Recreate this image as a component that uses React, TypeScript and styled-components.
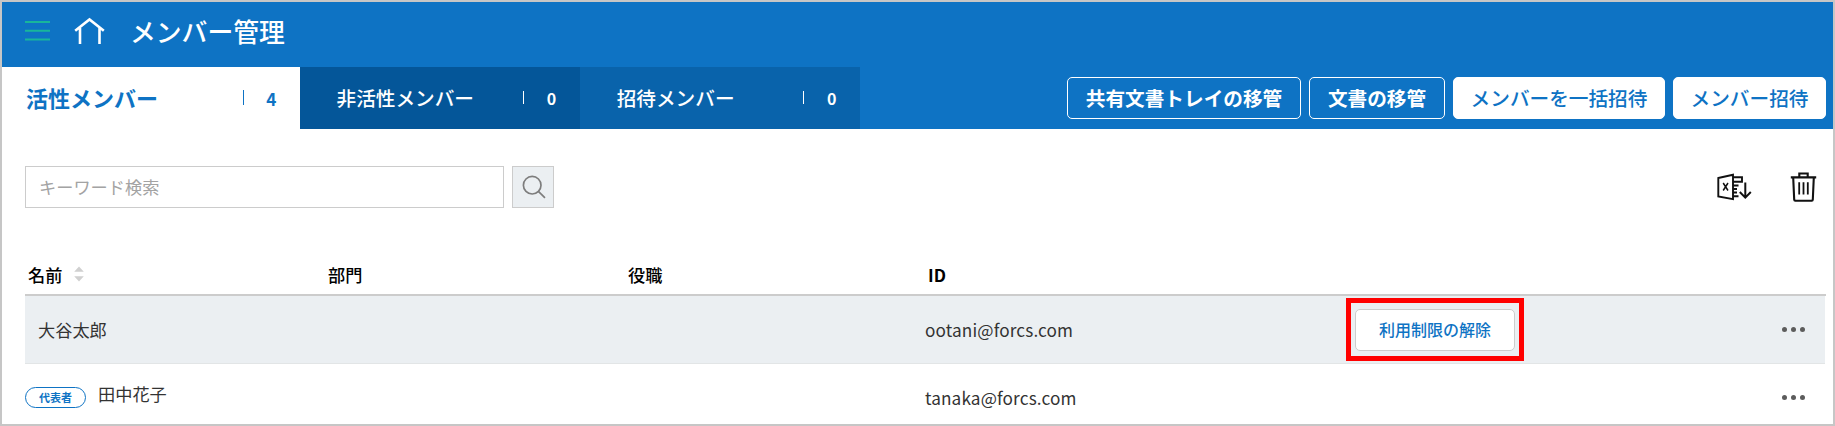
import React from 'react';
import styled, { createGlobalStyle } from 'styled-components';

const blue = '#0e73c4';

const GlobalStyle = createGlobalStyle`
  *, *::before, *::after { box-sizing: border-box; }
  body { margin: 0; background: #fff; }
  button { font: inherit; margin: 0; cursor: pointer; }
`;

const Frame = styled.div`
  width: 1835px;
  height: 426px;
  overflow: hidden;
  border: 2px solid #c6c6c6;
  background: #fff;
  color: #333;
  font-family: 'Noto Sans CJK JP', 'Noto Sans', sans-serif;
  font-size: 17.2px;
  line-height: 1;
`;

const Header = styled.header`
  height: 126.5px;
  background: ${blue};
  color: #fff;
`;

const TitleBar = styled.div`
  display: flex;
  align-items: center;
  height: 65px;
  padding: 0 0 7px 23px;
`;

const HomeLink = styled.a`
  display: flex;
  margin: 0 0 1px 24px;
`;

const Title = styled.h1`
  margin: 0 0 1px 25px;
  font-size: 25.8px;
  font-weight: 500;
`;

const NavRow = styled.div`
  display: flex;
  height: 61.5px;
`;

const Tab = styled.button<{ $tone: string; $active?: boolean }>`
  display: flex;
  align-items: center;
  width: ${p => (p.$active ? '297.5px' : '280.2px')};
  padding: ${p => (p.$active ? '0 23px 1px 24px' : '0 23.5px 0 37px')};
  border: 0;
  background: ${p => p.$tone};
  color: ${p => (p.$active ? blue : '#fff')};
  font-size: ${p => (p.$active ? '22px' : '19.65px')};
  font-weight: ${p => (p.$active ? 700 : 500)};
  line-height: 1;
  white-space: nowrap;
`;

const TabRule = styled.i<{ $tall?: boolean }>`
  width: 1px;
  height: ${p => (p.$tall ? 15 : 13)}px;
  margin: 0 ${p => (p.$tall ? 22 : 22.5)}px 0 auto;
  background: currentColor;
`;

const TabCount = styled.span<{ $large?: boolean }>`
  margin-top: ${p => (p.$large ? 3 : 0)}px;
  font-size: ${p => (p.$large ? '17.2px' : '16px')};
  font-weight: 700;
`;

const Actions = styled.div`
  display: flex;
  gap: 8px;
  margin: 10px 7px 0 auto;
`;

const ActionButton = styled.button<{ $w: number; $solid?: boolean }>`
  width: ${p => p.$w}px;
  height: 42px;
  padding: 0;
  border: 1px solid #fff;
  border-radius: 5px;
  background: ${p => (p.$solid ? '#fff' : 'transparent')};
  color: ${p => (p.$solid ? blue : '#fff')};
  font-size: 19.65px;
  font-weight: ${p => (p.$solid ? 500 : 700)};
  line-height: 1;
  white-space: nowrap;
`;

const Toolbar = styled.div`
  display: flex;
  align-items: center;
  height: 42px;
  margin: 37px 0 0 23px;
`;

const SearchInput = styled.input`
  width: 479px;
  height: 42px;
  padding: 0 13px 0 13px;
  border: 1px solid #ccc;
  outline: 0;
  font: inherit;
  color: #333;
  &::placeholder { color: #a3a3a3; opacity: 1; }
`;

const SearchButton = styled.button`
  display: flex;
  width: 42px;
  height: 42px;
  margin-left: 8px;
  padding: 8px 0 0 9px;
  border: 1px solid #ccc;
  background: #ebeff2;
`;

const Tools = styled.div`
  display: flex;
  align-items: center;
  gap: 38px;
  margin: 0 16px 0 auto;
`;

const Table = styled.section`
  width: 1801px;
  margin: 49px 0 0 23px;
`;

const columns = '300px 300px 300px 430px 1fr';

const HeadRow = styled.div`
  display: grid;
  grid-template-columns: ${columns};
  align-items: center;
  height: 39.5px;
  padding: 0 0 2px 3px;
  border-bottom: 2px solid #ccc;
  color: #000;
  font-weight: 500;
`;

const HeadCell = styled.div<{ $bold?: boolean }>`
  display: flex;
  align-items: center;
  gap: 12px;
  font-weight: ${p => (p.$bold ? 700 : 500)};
`;

const Row = styled.div<{ $shaded?: boolean }>`
  display: grid;
  grid-template-columns: ${columns};
  align-items: center;
  width: 1799.5px;
  height: 68px;
  background: ${p => (p.$shaded ? '#ebeff2' : '#fff')};
  border-bottom: 1px solid #e2e5e6;
`;

const NameCell = styled.div<{ $indent?: boolean }>`
  display: flex;
  align-items: center;
  gap: 12px;
  padding-left: ${p => (p.$indent ? 13 : 0)}px;
`;

const MemberName = styled.span<{ $raised?: boolean }>`
  margin-bottom: ${p => (p.$raised ? 7 : 0)}px;
`;

const IdCell = styled.div`
  grid-column: 4;
  letter-spacing: 0.13px;
`;

const Badge = styled.span`
  display: flex;
  align-items: center;
  justify-content: center;
  width: 61px;
  height: 21px;
  border: 1.3px solid ${blue};
  border-radius: 11px;
  color: ${blue};
  font-size: 11px;
  font-weight: 700;
`;

const RowActions = styled.div`
  grid-column: 5;
  display: flex;
  align-items: center;
  justify-content: space-between;
  padding-right: 20px;
`;

const Highlight = styled.div`
  position: relative;
  &::after {
    content: '';
    position: absolute;
    inset: -10.5px -9px;
    border: 5px solid #f00;
    pointer-events: none;
  }
`;

const UnlockButton = styled.button`
  display: block;
  width: 160px;
  height: 42px;
  padding: 0 0 2px;
  border: 1px solid #ccc;
  border-radius: 5px;
  background: #fff;
  color: ${blue};
  font-size: 16px;
  font-weight: 500;
  line-height: 1;
`;

const More = styled.span`
  display: flex;
  gap: 3.7px;
  margin-left: auto;
  i { width: 5px; height: 5px; border-radius: 50%; background: #5c5c5c; }
`;

const MoreDots = () => (
  <More><i /><i /><i /></More>
);

const MenuIcon = () => (
  <svg width="25" height="22" viewBox="0 0 25 22" stroke="#18b69b" strokeWidth="2">
    <path d="M0 2h25M0 10.7h25M0 19.4h25" />
  </svg>
);

const HomeIcon = () => (
  <svg width="31" height="28" viewBox="0 0 31 28" fill="none" stroke="#fff" strokeWidth="2.6">
    <path d="M1.2 13.8 15.5 2.4 29.8 13.8M6 11v16M25.5 11v16" />
  </svg>
);

const SearchIcon = () => (
  <svg width="24" height="24" viewBox="0 0 24 24" fill="none" stroke="#7d7d7d" strokeWidth="1.7">
    <circle cx="10.2" cy="10.2" r="8.8" />
    <path d="m16.4 16.4 6.6 6.4" />
  </svg>
);

const ExcelIcon = () => (
  <svg width="35" height="28" viewBox="0 0 35 28" fill="none" stroke="#111" strokeWidth="1.9">
    <path d="M1.3 5 16 1.8v24.4L1.3 23.5z" />
    <path d="M6.2 10l4.8 7.5M11 10l-4.8 7.5" strokeWidth="1.5" />
    <path d="M16 4.2h9v4.6h-9M16 12.5h5.5M16 16h4M16 19.5h4M16 23.3h5.5" />
    <path d="M28.3 9.5v15M22.8 19l5.5 5.6 5.5-5.6" strokeWidth="2" />
  </svg>
);

const TrashIcon = () => (
  <svg width="27" height="30" viewBox="0 0 27 30" fill="none" stroke="#111" strokeWidth="2.1">
    <path d="M.8 5.4h25.4M9.3 5V1.5h8.4V5M3.2 5.5l1 22.2q.1 1 1 1h16.6q.9 0 1-1l1-22.2" />
    <path d="M9.2 10.2v12.3M13.5 10.2v12.3M17.8 10.2v12.3" strokeWidth="1.8" />
  </svg>
);

const SortIcon = () => (
  <svg width="10" height="16" viewBox="0 0 10 16" fill="#d0d0d0">
    <path d="M5 0.5 9.8 5.8H.2zM5 15.5 9.8 10.2H.2z" />
  </svg>
);

export default function App() {
  return (
    <>
      <GlobalStyle />
      <Frame>
        <Header>
          <TitleBar>
            <MenuIcon />
            <HomeLink><HomeIcon /></HomeLink>
            <Title>メンバー管理</Title>
          </TitleBar>
          <NavRow>
            <Tab $tone="#fff" $active>
              活性メンバー<TabRule $tall /><TabCount $large>4</TabCount>
            </Tab>
            <Tab $tone="#045699">
              非活性メンバー<TabRule /><TabCount>0</TabCount>
            </Tab>
            <Tab $tone="#0963ab">
              招待メンバー<TabRule /><TabCount>0</TabCount>
            </Tab>
            <Actions>
              <ActionButton $w={234}>共有文書トレイの移管</ActionButton>
              <ActionButton $w={136}>文書の移管</ActionButton>
              <ActionButton $w={212} $solid>メンバーを一括招待</ActionButton>
              <ActionButton $w={153} $solid>メンバー招待</ActionButton>
            </Actions>
          </NavRow>
        </Header>
        <Toolbar>
          <SearchInput placeholder="キーワード検索" />
          <SearchButton><SearchIcon /></SearchButton>
          <Tools><ExcelIcon /><TrashIcon /></Tools>
        </Toolbar>
        <Table>
          <HeadRow>
            <HeadCell>名前<SortIcon /></HeadCell>
            <HeadCell>部門</HeadCell>
            <HeadCell>役職</HeadCell>
            <HeadCell $bold>ID</HeadCell>
          </HeadRow>
          <Row $shaded>
            <NameCell $indent><MemberName>大谷太郎</MemberName></NameCell>
            <IdCell>ootani@forcs.com</IdCell>
            <RowActions>
              <Highlight><UnlockButton>利用制限の解除</UnlockButton></Highlight>
              <MoreDots />
            </RowActions>
          </Row>
          <Row>
            <NameCell><Badge>代表者</Badge><MemberName $raised>田中花子</MemberName></NameCell>
            <IdCell>tanaka@forcs.com</IdCell>
            <RowActions><MoreDots /></RowActions>
          </Row>
        </Table>
      </Frame>
    </>
  );
}
